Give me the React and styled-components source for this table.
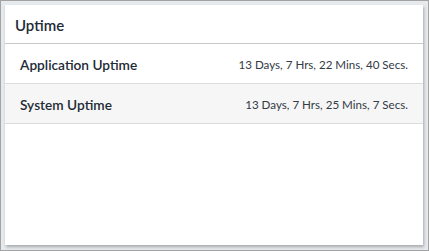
import React from "react";
import styled, { createGlobalStyle } from "styled-components";

const Global = createGlobalStyle`
  html, body { margin: 0; padding: 0; }
  body { font-family: Lato, "Noto Sans", sans-serif; }
  * { box-sizing: border-box; }
`;

const Frame = styled.div`
  width: 429px;
  height: 251px;
  border: 1px solid #a3a3a3;
  background: #e7eaed;
  padding: 4px 5px 5px 4px;
  display: flex;
`;

const Card = styled.section`
  flex: 1;
  background: #fff;
  box-shadow: 1px 2px 3px rgba(0, 0, 0, 0.28);
  display: flex;
  flex-direction: column;
`;

const Header = styled.header`
  height: 39px;
  padding: 1px 10px 0;
  display: flex;
  align-items: center;
  font-size: 15px;
  font-weight: 600;
  color: #222a35;
  border-bottom: 1px solid #c9c9c9;
`;

const Row = styled.div`
  height: 40px;
  padding: 1px 15px 0 15px;
  display: flex;
  align-items: center;
  justify-content: space-between;
  background: ${(p) => (p.$alt ? "#f6f6f6" : "#fff")};
  border-bottom: 1px solid #dcdcdc;
`;

const Label = styled.span`
  font-size: 13.7px;
  font-weight: 600;
  color: #222a35;
`;

const Value = styled.span`
  font-size: 11.6px;
  color: #333a45;
`;

const rows = [
  ["Application Uptime", "13 Days, 7 Hrs, 22 Mins, 40 Secs."],
  ["System Uptime", "13 Days, 7 Hrs, 25 Mins, 7 Secs."],
];

export default function App() {
  return (
    <>
      <Global />
      <Frame>
        <Card>
          <Header>Uptime</Header>
          {rows.map(([l, v], i) => (
            <Row key={l} $alt={i % 2 === 1}>
              <Label>{l}</Label>
              <Value>{v}</Value>
            </Row>
          ))}
        </Card>
      </Frame>
    </>
  );
}
